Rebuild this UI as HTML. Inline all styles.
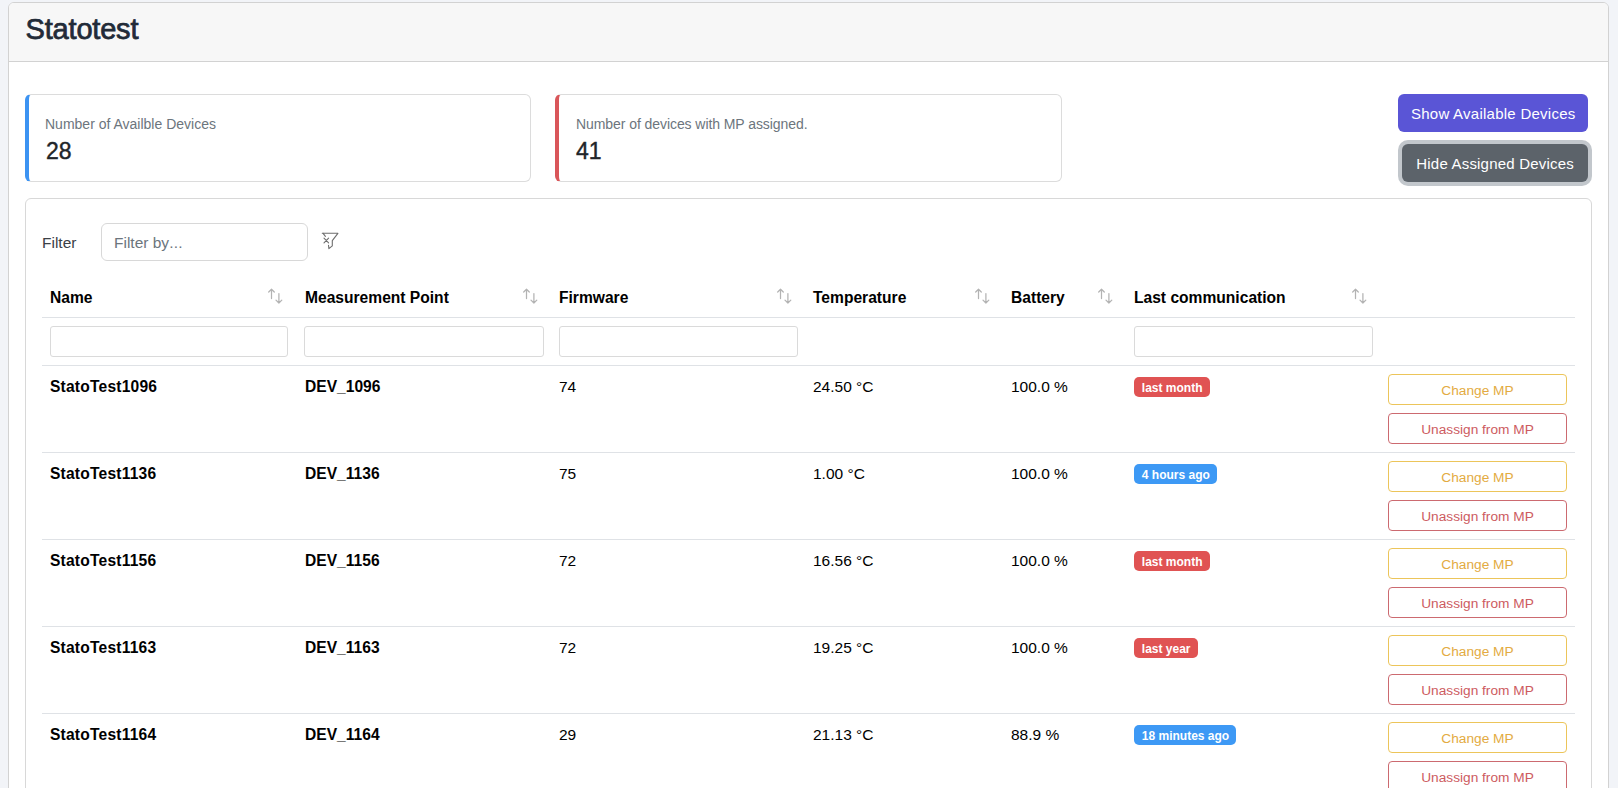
<!DOCTYPE html>
<html><head><meta charset="utf-8"><style>
html,body{margin:0;padding:0;}
body{width:1618px;height:788px;overflow:hidden;background:#f2f4f8;position:relative;font-family:"Liberation Sans", sans-serif;}
.t{position:absolute;white-space:nowrap;line-height:1;}
.box{position:absolute;box-sizing:border-box;}
</style></head><body>
<div class="box" style="left:8px;top:2px;width:1601px;height:820px;border:1px solid #d2d2d2;border-radius:6px;background:#fff;overflow:hidden"><div class="box" style="left:0;top:0;width:1599px;height:59px;background:#f7f7f7;border-bottom:1px solid #d2d2d2"></div></div>
<div class="t" style="left:25.6px;top:15.35px;font-size:29px;color:#222b38;font-weight:normal;-webkit-text-stroke:0.75px #222b38;letter-spacing:-0.2px">Statotest</div>
<div class="box" style="left:25px;top:94px;width:506px;height:88px;border:1px solid #dcdcdc;border-left:4px solid #3c93f2;border-radius:6px;background:#fff"></div>
<div class="box" style="left:555px;top:94px;width:507px;height:88px;border:1px solid #dcdcdc;border-left:4px solid #d9565a;border-radius:6px;background:#fff"></div>
<div class="t" style="left:45px;top:117.15px;font-size:14px;color:#6c757d;font-weight:normal;">Number of Availble Devices</div>
<div class="t" style="left:46px;top:139.63px;font-size:23px;color:#212529;font-weight:normal;-webkit-text-stroke:0.4px #212529">28</div>
<div class="t" style="left:576px;top:117.15px;font-size:14px;color:#6c757d;font-weight:normal;letter-spacing:-0.07px">Number of devices with MP assigned.</div>
<div class="t" style="left:576px;top:139.63px;font-size:23px;color:#212529;font-weight:normal;-webkit-text-stroke:0.4px #212529">41</div>
<div class="box" style="left:1398px;top:94px;width:190px;height:38px;border-radius:6px;background:#5a55d6"></div>
<div class="t" style="left:1411px;top:106.20px;font-size:15px;color:#fff;font-weight:normal;letter-spacing:0.25px">Show Available Devices</div>
<div class="box" style="left:1402px;top:144px;width:186px;height:38px;border-radius:6px;background:#5c636a;box-shadow:0 0 0 4px #c2c7cc"></div>
<div class="t" style="left:1416.3px;top:155.60px;font-size:15px;color:#fff;font-weight:normal;letter-spacing:0.2px">Hide Assigned Devices</div>
<div class="box" style="left:25px;top:198px;width:1567px;height:700px;border:1px solid #d8d8d8;border-radius:6px;background:#fff"></div>
<div class="t" style="left:42px;top:235.18px;font-size:15.5px;color:#3b4046;font-weight:normal;">Filter</div>
<div class="box" style="left:101px;top:223px;width:207px;height:38px;border:1px solid #d8d8d8;border-radius:6px;background:#fff"></div>
<div class="t" style="left:114px;top:235.18px;font-size:15.5px;color:#6c757d;font-weight:normal;">Filter by<span style="letter-spacing:0.2px">...</span></div>
<svg width="20" height="20" viewBox="0 0 20 20" style="position:absolute;left:319px;top:230px"><g fill="none" stroke="#6e6e6e" stroke-width="1.1" stroke-linecap="round" stroke-linejoin="round"><path d="M3.3 3.3H18.9L13.3 10.6V15.9L9.9 18.6L9.5 15.3"/><path d="M4.1 3.4L6.4 6.3"/><path d="M5 8.2L9.6 12.8M9.6 8.2L5 12.8"/></g></svg>
<div class="t" style="left:50px;top:290.19px;font-size:15.6px;color:#000;font-weight:bold;">Name</div>
<div class="t" style="left:305px;top:290.19px;font-size:15.6px;color:#000;font-weight:bold;">Measurement Point</div>
<div class="t" style="left:559px;top:290.19px;font-size:15.6px;color:#000;font-weight:bold;">Firmware</div>
<div class="t" style="left:813px;top:290.19px;font-size:15.6px;color:#000;font-weight:bold;">Temperature</div>
<div class="t" style="left:1011px;top:290.19px;font-size:15.6px;color:#000;font-weight:bold;">Battery</div>
<div class="t" style="left:1134px;top:290.19px;font-size:15.6px;color:#000;font-weight:bold;">Last communication</div>
<svg width="16" height="18" viewBox="0 0 16 18" style="position:absolute;left:267px;top:287px"><g fill="none" stroke="#b3b3b3" stroke-width="1.25" stroke-linecap="round" stroke-linejoin="round"><path d="M4.5 2.2V11.6M1.7 5.0L4.5 2.2L7.3 5.0"/><path d="M11.9 6.5V16.0M9.0 13.1L11.9 16.0L14.8 13.1"/></g></svg>
<svg width="16" height="18" viewBox="0 0 16 18" style="position:absolute;left:522px;top:287px"><g fill="none" stroke="#b3b3b3" stroke-width="1.25" stroke-linecap="round" stroke-linejoin="round"><path d="M4.5 2.2V11.6M1.7 5.0L4.5 2.2L7.3 5.0"/><path d="M11.9 6.5V16.0M9.0 13.1L11.9 16.0L14.8 13.1"/></g></svg>
<svg width="16" height="18" viewBox="0 0 16 18" style="position:absolute;left:776px;top:287px"><g fill="none" stroke="#b3b3b3" stroke-width="1.25" stroke-linecap="round" stroke-linejoin="round"><path d="M4.5 2.2V11.6M1.7 5.0L4.5 2.2L7.3 5.0"/><path d="M11.9 6.5V16.0M9.0 13.1L11.9 16.0L14.8 13.1"/></g></svg>
<svg width="16" height="18" viewBox="0 0 16 18" style="position:absolute;left:974px;top:287px"><g fill="none" stroke="#b3b3b3" stroke-width="1.25" stroke-linecap="round" stroke-linejoin="round"><path d="M4.5 2.2V11.6M1.7 5.0L4.5 2.2L7.3 5.0"/><path d="M11.9 6.5V16.0M9.0 13.1L11.9 16.0L14.8 13.1"/></g></svg>
<svg width="16" height="18" viewBox="0 0 16 18" style="position:absolute;left:1097px;top:287px"><g fill="none" stroke="#b3b3b3" stroke-width="1.25" stroke-linecap="round" stroke-linejoin="round"><path d="M4.5 2.2V11.6M1.7 5.0L4.5 2.2L7.3 5.0"/><path d="M11.9 6.5V16.0M9.0 13.1L11.9 16.0L14.8 13.1"/></g></svg>
<svg width="16" height="18" viewBox="0 0 16 18" style="position:absolute;left:1351px;top:287px"><g fill="none" stroke="#b3b3b3" stroke-width="1.25" stroke-linecap="round" stroke-linejoin="round"><path d="M4.5 2.2V11.6M1.7 5.0L4.5 2.2L7.3 5.0"/><path d="M11.9 6.5V16.0M9.0 13.1L11.9 16.0L14.8 13.1"/></g></svg>
<div class="box" style="left:42px;top:317px;width:1533px;height:1px;background:#dfe2e6"></div>
<div class="box" style="left:50px;top:326px;width:238px;height:31px;border:1px solid #dadada;border-radius:3px;background:#fff"></div>
<div class="box" style="left:304px;top:326px;width:240px;height:31px;border:1px solid #dadada;border-radius:3px;background:#fff"></div>
<div class="box" style="left:559px;top:326px;width:239px;height:31px;border:1px solid #dadada;border-radius:3px;background:#fff"></div>
<div class="box" style="left:1134px;top:326px;width:239px;height:31px;border:1px solid #dadada;border-radius:3px;background:#fff"></div>
<div class="box" style="left:42px;top:365px;width:1533px;height:1px;background:#dfe2e6"></div>
<div class="t" style="left:50px;top:379.29px;font-size:15.6px;color:#000;font-weight:bold;letter-spacing:0.2px">StatoTest1096</div>
<div class="t" style="left:305px;top:379.29px;font-size:15.6px;color:#000;font-weight:bold;">DEV_1096</div>
<div class="t" style="left:559px;top:378.68px;font-size:15.5px;color:#000;font-weight:normal;">74</div>
<div class="t" style="left:813px;top:378.68px;font-size:15.5px;color:#000;font-weight:normal;">24.50 °C</div>
<div class="t" style="left:1011px;top:378.68px;font-size:15.5px;color:#000;font-weight:normal;">100.0 %</div>
<div class="box" style="left:1134px;top:377px;height:20px;padding:0 7.3px 0 7.8px;border-radius:5px;background:#e05353;color:#fff;font-weight:bold;font-size:12px;line-height:22px;white-space:nowrap">last month</div>
<div class="box" style="left:1388px;top:374px;width:179px;height:31px;border:1px solid #ecc55a;border-radius:4px;background:#fff;color:#e3ab42;font-size:13.7px;line-height:32px;text-align:center">Change MP</div>
<div class="box" style="left:1388px;top:413px;width:179px;height:31px;border:1px solid #cc6a70;border-radius:4px;background:#fff;color:#cd5b61;font-size:13.7px;line-height:32px;text-align:center">Unassign from MP</div>
<div class="box" style="left:42px;top:452px;width:1533px;height:1px;background:#dfe2e6"></div>
<div class="t" style="left:50px;top:466.29px;font-size:15.6px;color:#000;font-weight:bold;letter-spacing:0.2px">StatoTest1136</div>
<div class="t" style="left:305px;top:466.29px;font-size:15.6px;color:#000;font-weight:bold;">DEV_1136</div>
<div class="t" style="left:559px;top:465.68px;font-size:15.5px;color:#000;font-weight:normal;">75</div>
<div class="t" style="left:813px;top:465.68px;font-size:15.5px;color:#000;font-weight:normal;">1.00 °C</div>
<div class="t" style="left:1011px;top:465.68px;font-size:15.5px;color:#000;font-weight:normal;">100.0 %</div>
<div class="box" style="left:1134px;top:464px;height:20px;padding:0 7.3px 0 7.8px;border-radius:5px;background:#3d99f5;color:#fff;font-weight:bold;font-size:12px;line-height:22px;white-space:nowrap">4 hours ago</div>
<div class="box" style="left:1388px;top:461px;width:179px;height:31px;border:1px solid #ecc55a;border-radius:4px;background:#fff;color:#e3ab42;font-size:13.7px;line-height:32px;text-align:center">Change MP</div>
<div class="box" style="left:1388px;top:500px;width:179px;height:31px;border:1px solid #cc6a70;border-radius:4px;background:#fff;color:#cd5b61;font-size:13.7px;line-height:32px;text-align:center">Unassign from MP</div>
<div class="box" style="left:42px;top:539px;width:1533px;height:1px;background:#dfe2e6"></div>
<div class="t" style="left:50px;top:553.29px;font-size:15.6px;color:#000;font-weight:bold;letter-spacing:0.2px">StatoTest1156</div>
<div class="t" style="left:305px;top:553.29px;font-size:15.6px;color:#000;font-weight:bold;">DEV_1156</div>
<div class="t" style="left:559px;top:552.68px;font-size:15.5px;color:#000;font-weight:normal;">72</div>
<div class="t" style="left:813px;top:552.68px;font-size:15.5px;color:#000;font-weight:normal;">16.56 °C</div>
<div class="t" style="left:1011px;top:552.68px;font-size:15.5px;color:#000;font-weight:normal;">100.0 %</div>
<div class="box" style="left:1134px;top:551px;height:20px;padding:0 7.3px 0 7.8px;border-radius:5px;background:#e05353;color:#fff;font-weight:bold;font-size:12px;line-height:22px;white-space:nowrap">last month</div>
<div class="box" style="left:1388px;top:548px;width:179px;height:31px;border:1px solid #ecc55a;border-radius:4px;background:#fff;color:#e3ab42;font-size:13.7px;line-height:32px;text-align:center">Change MP</div>
<div class="box" style="left:1388px;top:587px;width:179px;height:31px;border:1px solid #cc6a70;border-radius:4px;background:#fff;color:#cd5b61;font-size:13.7px;line-height:32px;text-align:center">Unassign from MP</div>
<div class="box" style="left:42px;top:626px;width:1533px;height:1px;background:#dfe2e6"></div>
<div class="t" style="left:50px;top:640.29px;font-size:15.6px;color:#000;font-weight:bold;letter-spacing:0.2px">StatoTest1163</div>
<div class="t" style="left:305px;top:640.29px;font-size:15.6px;color:#000;font-weight:bold;">DEV_1163</div>
<div class="t" style="left:559px;top:639.68px;font-size:15.5px;color:#000;font-weight:normal;">72</div>
<div class="t" style="left:813px;top:639.68px;font-size:15.5px;color:#000;font-weight:normal;">19.25 °C</div>
<div class="t" style="left:1011px;top:639.68px;font-size:15.5px;color:#000;font-weight:normal;">100.0 %</div>
<div class="box" style="left:1134px;top:638px;height:20px;padding:0 7.3px 0 7.8px;border-radius:5px;background:#e05353;color:#fff;font-weight:bold;font-size:12px;line-height:22px;white-space:nowrap">last year</div>
<div class="box" style="left:1388px;top:635px;width:179px;height:31px;border:1px solid #ecc55a;border-radius:4px;background:#fff;color:#e3ab42;font-size:13.7px;line-height:32px;text-align:center">Change MP</div>
<div class="box" style="left:1388px;top:674px;width:179px;height:31px;border:1px solid #cc6a70;border-radius:4px;background:#fff;color:#cd5b61;font-size:13.7px;line-height:32px;text-align:center">Unassign from MP</div>
<div class="box" style="left:42px;top:713px;width:1533px;height:1px;background:#dfe2e6"></div>
<div class="t" style="left:50px;top:727.29px;font-size:15.6px;color:#000;font-weight:bold;letter-spacing:0.2px">StatoTest1164</div>
<div class="t" style="left:305px;top:727.29px;font-size:15.6px;color:#000;font-weight:bold;">DEV_1164</div>
<div class="t" style="left:559px;top:726.68px;font-size:15.5px;color:#000;font-weight:normal;">29</div>
<div class="t" style="left:813px;top:726.68px;font-size:15.5px;color:#000;font-weight:normal;">21.13 °C</div>
<div class="t" style="left:1011px;top:726.68px;font-size:15.5px;color:#000;font-weight:normal;">88.9 %</div>
<div class="box" style="left:1134px;top:725px;height:20px;padding:0 7.3px 0 7.8px;border-radius:5px;background:#3d99f5;color:#fff;font-weight:bold;font-size:12px;line-height:22px;white-space:nowrap">18 minutes ago</div>
<div class="box" style="left:1388px;top:722px;width:179px;height:31px;border:1px solid #ecc55a;border-radius:4px;background:#fff;color:#e3ab42;font-size:13.7px;line-height:32px;text-align:center">Change MP</div>
<div class="box" style="left:1388px;top:761px;width:179px;height:31px;border:1px solid #cc6a70;border-radius:4px;background:#fff;color:#cd5b61;font-size:13.7px;line-height:32px;text-align:center">Unassign from MP</div>
</body></html>
